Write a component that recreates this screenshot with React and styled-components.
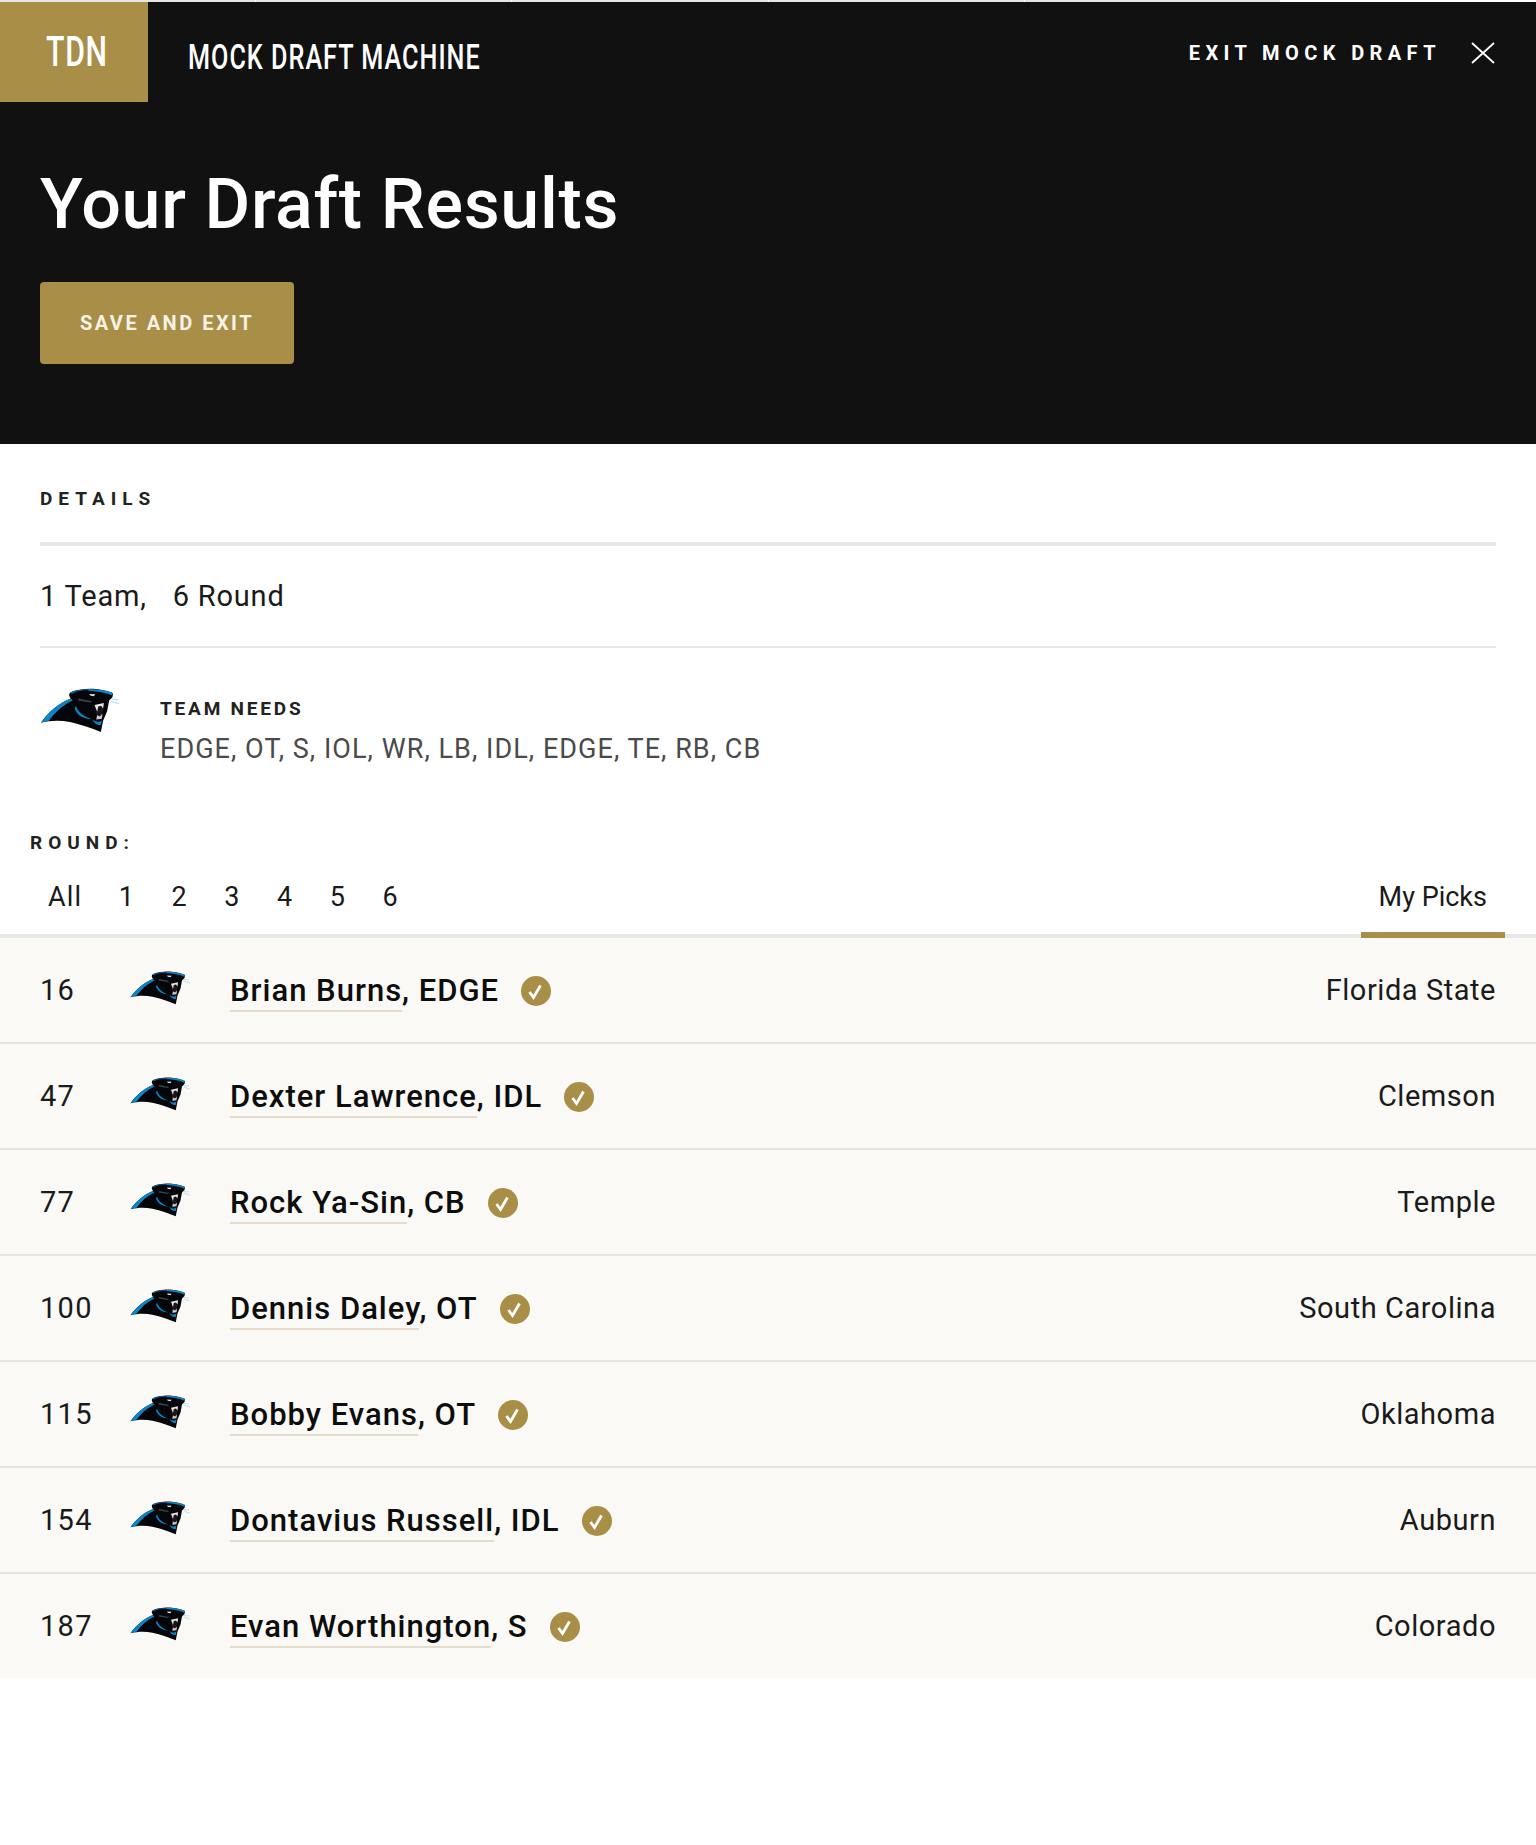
import React from 'react'
import styled, { createGlobalStyle } from 'styled-components'

const GOLD = '#a98e48'
const DARK = '#111111'
const BODY_FONT = "Roboto, 'Noto Sans', sans-serif"

const picks = [
  { number: 16, name: 'Brian Burns', position: 'EDGE', school: 'Florida State' },
  { number: 47, name: 'Dexter Lawrence', position: 'IDL', school: 'Clemson' },
  { number: 77, name: 'Rock Ya-Sin', position: 'CB', school: 'Temple' },
  { number: 100, name: 'Dennis Daley', position: 'OT', school: 'South Carolina' },
  { number: 115, name: 'Bobby Evans', position: 'OT', school: 'Oklahoma' },
  { number: 154, name: 'Dontavius Russell', position: 'IDL', school: 'Auburn' },
  { number: 187, name: 'Evan Worthington', position: 'S', school: 'Colorado' },
]

const rounds = ['All', '1', '2', '3', '4', '5', '6']

const PantherLogo = ({ width, height }) => (
  <svg width={width} height={height} viewBox="60 52 240 136" aria-hidden="true">
    <path
      fill="#04060a"
      d="M62 157 C85 125 115 98 152 84 C146 76 146 70 150 66 C170 56 200 53 228 55 C248 57 268 62 280 68 L278 80 L268 90 L262 122 L250 150 L243 185 C220 176 190 164 150 155 C120 149 90 150 62 157 Z"
    />
    <path fill="#0a85c7" d="M62 157 C85 125 115 98 152 84 L158 90 C128 104 104 126 86 151 C78 152 70 154 62 157 Z" />
    <path fill="#0a85c7" d="M205 55 C240 56 266 60 280 68 L276 74 C260 66 235 62 205 60 Z" />
    <path fill="#0b5f92" d="M150 66 C160 60 180 57 205 55 L205 58 C180 60 165 63 156 70 Z" />
    <path fill="#0a85c7" d="M168 106 C172 122 188 138 214 146 C192 146 170 134 164 114 Z" />
    <path fill="#0a85c7" d="M216 146 C226 156 238 156 246 150 L243 164 C232 166 222 158 216 146 Z" />
    <path fill="#39454f" d="M176 84 L216 92 L212 96 L174 90 Z" />
    <path fill="#cfe9f6" d="M208 70 L226 71 L222 77 L211 75 Z" />
    <path fill="#1c1418" d="M224 104 L252 98 L246 144 L230 146 Z" />
    <path fill="#e9e8e2" d="M224 103 L252 97 L250 114 L244 106 L235 108 L232 124 Z" />
    <path fill="#c9cdcf" d="M229 147 L246 145 L248 130 L240 138 L232 134 Z" />
    <path stroke="#a8daf2" strokeWidth="3" fill="none" d="M276 86 L296 88 M274 92 L298 100" />
  </svg>
)

const CloseIcon = () => (
  <svg width="24" height="22" viewBox="0 0 24 22" aria-hidden="true">
    <path d="M1 1 L23 21 M23 1 L1 21" stroke="#ffffff" strokeWidth="1.8" fill="none" />
  </svg>
)

const CheckBadge = () => (
  <CheckCircle>
    <svg width="30" height="30" viewBox="0 0 30 30" aria-hidden="true">
      <path d="M8.5 16 L12.5 21.5 L19.5 9.5" stroke="#ffffff" strokeWidth="2.8" fill="none" />
    </svg>
  </CheckCircle>
)

const App = () => {
  return (
    <Page>
      <GlobalStyle />
      <TopStrip>
        <StripPiece />
        <StripPiece />
        <StripPiece />
        <StripPiece />
        <StripPiece />
      </TopStrip>
      <Header>
        <NavBar>
          <NavLeft>
            <BrandBox>
              <BrandText>TDN</BrandText>
            </BrandBox>
            <MachineName>MOCK DRAFT MACHINE</MachineName>
          </NavLeft>
          <ExitLink>
            <ExitText>EXIT MOCK DRAFT</ExitText>
            <CloseIcon />
          </ExitLink>
        </NavBar>
        <Title>Your Draft Results</Title>
        <SaveButton>SAVE AND EXIT</SaveButton>
      </Header>

      <Details>
        <SectionLabel>DETAILS</SectionLabel>
        <Summary>
          <span>1 Team,</span>
          <span>6 Round</span>
        </Summary>
        <TeamBlock>
          <PantherLogo width={80} height={45} />
          <div>
            <NeedsLabel>TEAM NEEDS</NeedsLabel>
            <NeedsList>EDGE, OT, S, IOL, WR, LB, IDL, EDGE, TE, RB, CB</NeedsList>
          </div>
        </TeamBlock>
      </Details>

      <RoundLabel>ROUND:</RoundLabel>
      <Tabs>
        <TabGroup>
          {rounds.map((round) => (
            <Tab key={round}>{round}</Tab>
          ))}
        </TabGroup>
        <Tab $active>My Picks</Tab>
      </Tabs>

      <PickList>
        {picks.map((pick) => (
          <PickRow key={pick.number}>
            <PickNumber>{pick.number}</PickNumber>
            <RowLogo>
              <PantherLogo width={60} height={34} />
            </RowLogo>
            <PlayerName>
              <PlayerLink>{pick.name}</PlayerLink>, {pick.position}
            </PlayerName>
            <CheckBadge />
            <School>{pick.school}</School>
          </PickRow>
        ))}
      </PickList>
    </Page>
  )
}

const GlobalStyle = createGlobalStyle`
  body {
    margin: 0;
    background: #ffffff;
    font-family: ${BODY_FONT};
    color: ${DARK};
  }
`

const Page = styled.div`
  min-height: 1845px;
  background: #ffffff;
`

const TopStrip = styled.div`
  display: flex;
  gap: 1px;
  height: 2px;
  width: 1280px;
`

const StripPiece = styled.div`
  flex: 1;
  background: #e6e6e6;
`

const Header = styled.header`
  background: ${DARK};
  height: 442px;
`

const NavBar = styled.div`
  display: flex;
  justify-content: space-between;
  align-items: flex-start;
  height: 100px;
  padding-right: 41px;
`

const NavLeft = styled.div`
  display: flex;
  align-items: flex-start;
  gap: 40px;
`

const BrandBox = styled.div`
  width: 148px;
  height: 100px;
  background: ${GOLD};
  padding: 26px 0 0 46px;
  box-sizing: border-box;
`

const BrandText = styled.div`
  font-family: 'Liberation Sans Narrow', Roboto, sans-serif;
  font-weight: 500;
  font-size: 42px;
  line-height: 48px;
  color: #ffffff;
  letter-spacing: 1px;
  transform: scaleX(0.72);
  transform-origin: left center;
`

const MachineName = styled.div`
  font-family: 'Liberation Sans Narrow', Roboto, sans-serif;
  font-weight: 500;
  font-size: 35px;
  line-height: 40px;
  margin-top: 36px;
  color: #ffffff;
  white-space: nowrap;
  letter-spacing: 1.4px;
  transform: scaleX(0.72);
  transform-origin: left center;
`

const ExitLink = styled.div`
  display: flex;
  align-items: center;
  gap: 30px;
  margin-top: 39px;
`

const ExitText = styled.div`
  font-weight: 700;
  font-size: 20px;
  line-height: 24px;
  letter-spacing: 5.4px;
  color: #ffffff;
  white-space: nowrap;
`

const Title = styled.h1`
  margin: 62px 0 0 40px;
  font-weight: 500;
  font-size: 70px;
  line-height: 80px;
  letter-spacing: 0.65px;
  color: #ffffff;
`

const SaveButton = styled.button`
  display: block;
  margin: 38px 0 0 40px;
  width: 254px;
  height: 82px;
  border: none;
  border-radius: 4px;
  background: ${GOLD};
  color: #f7f2e6;
  font-family: ${BODY_FONT};
  font-weight: 700;
  font-size: 20px;
  letter-spacing: 2.5px;
`

const Details = styled.section`
  padding: 45px 40px 0;
`

const SectionLabel = styled.div`
  font-weight: 700;
  font-size: 19px;
  line-height: 20px;
  letter-spacing: 6px;
  color: #222222;
  padding-bottom: 33px;
  border-bottom: 4px solid #e8e8e8;
`

const Summary = styled.div`
  display: flex;
  align-items: center;
  gap: 26px;
  height: 100px;
  font-size: 29px;
  letter-spacing: 0.8px;
  color: #1a1a1a;
  border-bottom: 2px solid #e8e8e8;
`

const TeamBlock = styled.div`
  display: flex;
  align-items: flex-start;
  gap: 40px;
  padding-top: 40px;
`

const NeedsLabel = styled.div`
  margin-top: 10px;
  font-weight: 700;
  font-size: 19px;
  line-height: 22px;
  letter-spacing: 2.8px;
  color: #222222;
`

const NeedsList = styled.div`
  margin-top: 11px;
  font-size: 27px;
  line-height: 36px;
  letter-spacing: 1.05px;
  color: #4a4a4a;
`

const RoundLabel = styled.div`
  margin: 66px 0 0 30px;
  font-weight: 700;
  font-size: 19px;
  line-height: 20px;
  letter-spacing: 6px;
  color: #222222;
`

const Tabs = styled.div`
  display: flex;
  justify-content: space-between;
  padding: 27px 31px 0 30px;
  border-bottom: 4px solid #e8e8e8;
`

const TabGroup = styled.div`
  display: flex;
  gap: 0.4px;
`

const Tab = styled.div`
  padding: 0 18px ${(props) => (props.$active ? '18px' : '20px')};
  margin-bottom: ${(props) => (props.$active ? '-4px' : '0')};
  font-size: 27px;
  line-height: 34px;
  letter-spacing: ${(props) => (props.$active ? '0' : '1.2px')};
  color: #1a1a1a;
  border-bottom: ${(props) => (props.$active ? `6px solid ${GOLD}` : 'none')};
`

const PickList = styled.div`
  background: #faf9f6;
`

const PickRow = styled.div`
  display: flex;
  align-items: center;
  height: 106px;
  box-sizing: border-box;
  padding: 0 40px;
  border-bottom: 2px solid #e5e4e0;

  &:last-child {
    height: 104px;
    border-bottom: none;
  }
`

const PickNumber = styled.div`
  width: 90px;
  font-size: 29px;
  letter-spacing: 1.3px;
  color: #1a1a1a;
`

const RowLogo = styled.div`
  display: flex;
  width: 100px;
  margin-bottom: 5px;
`

const PlayerName = styled.div`
  margin-top: 2px;
  font-weight: 500;
  font-size: 31px;
  line-height: 38px;
  letter-spacing: 1px;
  color: #0d0d0d;
`

const PlayerLink = styled.span`
  border-bottom: 2px solid #e6dccb;
  padding-bottom: 1px;
`

const CheckCircle = styled.div`
  display: flex;
  width: 30px;
  height: 30px;
  margin: 2px 0 0 22px;
  border-radius: 50%;
  background: ${GOLD};
`

const School = styled.div`
  margin-left: auto;
  font-size: 29px;
  letter-spacing: 0.55px;
  color: #1a1a1a;
`

export default App
